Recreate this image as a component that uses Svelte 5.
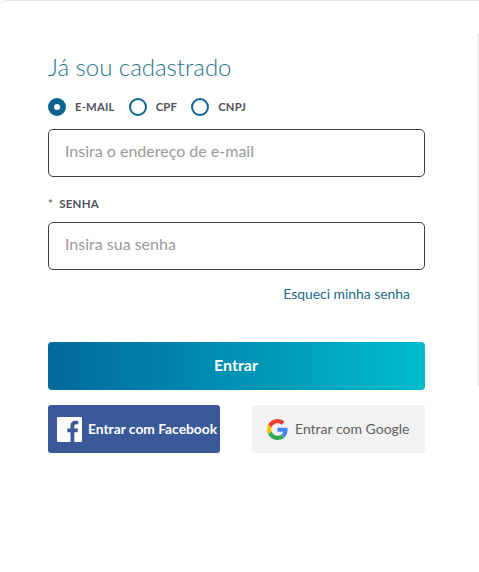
<script lang="ts">
  const docTypes = ['E-MAIL', 'CPF', 'CNPJ'];
  let selected = $state('E-MAIL');
  let email = $state('');
  let senha = $state('');
</script>

<div class="page">
  <form class="login" onsubmit={(e) => e.preventDefault()}>
    <h2>Já sou cadastrado</h2>

    <div class="radios">
      {#each docTypes as t}
        <label class="radio">
          <input type="radio" name="doc" value={t} bind:group={selected} />
          <span class="dot"></span>
          <span>{t}</span>
        </label>
      {/each}
    </div>

    <input class="field" type="text" placeholder="Insira o endereço de e-mail" bind:value={email} />

    <div class="label"><span class="star">*</span>SENHA</div>
    <input class="field" type="password" placeholder="Insira sua senha" bind:value={senha} />

    <a class="forgot" href="#senha">Esqueci minha senha</a>

    <button class="enter" type="submit">Entrar</button>

    <div class="social">
      <button class="fb" type="button">
        <svg width="25" height="25" viewBox="0 0 25 25">
          <rect width="25" height="25" rx="1" fill="#fff" />
          <path d="M17.3 25v-9.7h3.200l.5-3.800h-3.700V9.100c0-1.100.3-1.800 1.900-1.800h2V3.900c-.4 0-1.500-.2-2.900-.2-2.900 0-4.800 1.800-4.800 5v2.800H10.300v3.800h3.200V25z" fill="#3b5998" />
        </svg>
        <span>Entrar com Facebook</span>
      </button>
      <button class="google" type="button">
        <svg width="21" height="21" viewBox="0 0 48 48">
          <path fill="#EA4335" d="M24 9.500c3.540 0 6.710 1.220 9.210 3.600l6.850-6.850C35.900 2.380 30.470 0 24 0 14.620 0 6.510 5.380 2.560 13.220l7.980 6.190C12.430 13.720 17.740 9.500 24 9.500z" />
          <path fill="#4285F4" d="M46.980 24.550c0-1.570-.15-3.090-.38-4.550H24v9.020h12.940c-.58 2.960-2.260 5.480-4.780 7.180l7.730 6c4.510-4.180 7.090-10.360 7.090-17.650z" />
          <path fill="#FBBC05" d="M10.530 28.590c-.48-1.450-.76-2.990-.76-4.590s.27-3.140.76-4.590l-7.980-6.190C.92 16.460 0 20.120 0 24c0 3.880.92 7.540 2.560 10.780l7.970-6.190z" />
          <path fill="#34A853" d="M24 48c6.480 0 11.930-2.130 15.890-5.810l-7.730-6c-2.150 1.450-4.920 2.300-8.160 2.300-6.260 0-11.570-4.220-13.470-9.910l-7.980 6.190C6.510 42.620 14.620 48 24 48z" />
        </svg>
        <span>Entrar com Google</span>
      </button>
    </div>
  </form>
  <div class="divider"></div>
</div>

<style>
  :global(body) {
    background: #fff;
  }
  .page {
    display: flex;
    justify-content: space-between;
    height: 572px;
    box-sizing: border-box;
    border-top: 1px solid #e2e2e2;
    border-top-left-radius: 8px;
    font-family: Lato, "Liberation Sans", sans-serif;
    overflow: hidden;
  }
  .login {
    width: 377px;
    margin-left: 48px;
    display: flex;
    flex-direction: column;
  }
  h2 {
    margin: 51px 0 0;
    font-size: 24px;
    line-height: 29px;
    font-weight: 300;
    color: #1f7391;
  }
  .radios {
    display: flex;
    gap: 14px;
    margin-top: 16px;
    height: 19px;
  }
  .radio {
    display: flex;
    align-items: center;
    gap: 9px;
    font-size: 11.3px;
    font-weight: 700;
    color: #50535c;
    letter-spacing: 0.2px;
  }
  .radio input {
    display: none;
  }
  .dot {
    width: 18px;
    height: 18px;
    box-sizing: border-box;
    border: 2px solid #0b6390;
    border-radius: 50%;
  }
  .radio input:checked + .dot {
    background: #0b6390;
    position: relative;
  }
  .radio input:checked + .dot::after {
    content: '';
    position: absolute;
    left: 4px;
    top: 4px;
    width: 6px;
    height: 6px;
    border-radius: 50%;
    background: #fff;
  }
  .field {
    height: 48px;
    box-sizing: border-box;
    border: 1px solid #3c3f45;
    border-radius: 5px;
    padding: 0 16px 5px;
    font: 400 16px Lato, "Liberation Sans", sans-serif;
    color: #333;
    outline: none;
    background: #fff;
  }
  .field::placeholder {
    color: #9a9a9a;
    opacity: 1;
  }
  .radios + .field {
    margin-top: 13px;
  }
  .label {
    margin-top: 20px;
    margin-bottom: 11px;
    height: 14px;
    line-height: 14px;
    font-size: 11.5px;
    font-weight: 700;
    color: #50535c;
    letter-spacing: 0.25px;
  }
  .star {
    font-weight: 400;
    margin-right: 6px;
  }
  .forgot {
    align-self: flex-end;
    margin-top: 15px;
    margin-right: 15px;
    font-size: 13.9px;
    line-height: 17px;
    color: #1c6a8c;
    text-decoration: none;
  }
  .enter {
    margin-top: 40px;
    height: 48px;
    border: 0;
    border-radius: 4px;
    background: linear-gradient(90deg, #01689b, #00bccd);
    color: #fff;
    font: 700 16px Lato, "Liberation Sans", sans-serif;
    padding: 0 1px 3px 0;
  }
  .social {
    display: flex;
    justify-content: space-between;
    margin-top: 15px;
  }
  .social button {
    height: 48px;
    border: 0;
    border-radius: 3px;
    display: flex;
    align-items: center;
    font-family: Lato, "Liberation Sans", sans-serif;
    white-space: nowrap;
    padding: 0;
  }
  .social span {
    margin-bottom: 2px;
  }
  .fb {
    width: 172px;
    background: #3b5998;
    color: #fff;
    font-size: 13.8px;
    font-weight: 700;
    padding-left: 9px !important;
    gap: 6px;
  }
  .google {
    width: 173px;
    background: #f2f2f2;
    color: #5e6066;
    font-size: 14px;
    padding-left: 15px !important;
    gap: 7px;
  }
  .divider {
    width: 1px;
    height: 353px;
    margin-top: 32px;
    background: #e4e4e4;
  }
</style>
